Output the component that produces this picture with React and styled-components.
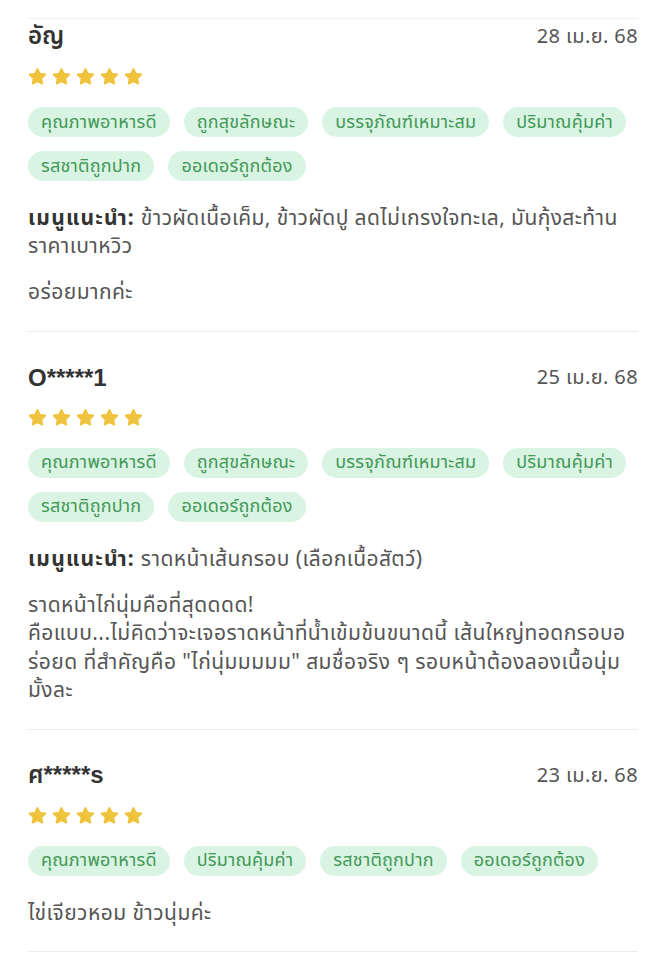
import React from "react";
import styled, { createGlobalStyle } from "styled-components";

const Global = createGlobalStyle`
  html, body { margin: 0; padding: 0; background: #fff; }
  body { font-family: "Noto Sans", "Noto Sans Thai", "Liberation Sans", sans-serif; -webkit-font-smoothing: antialiased; }
`;

const Page = styled.div`
  padding: 18px 28px 0 28px;
  width: 610px;
`;

const Divider = styled.div`
  height: 1px;
  background: #f0f0f0;
`;

const Card = styled.section`
  padding: ${(p) => (p.$first ? "3px" : "31px")} 0 25px 0;
  border-bottom: 1px solid #ececec;
`;

const Header = styled.div`
  display: flex;
  justify-content: space-between;
  align-items: center;
  height: 30px;
`;

const Name = styled.div`
  font-family: "Liberation Sans", "Noto Sans Thai", "Noto Sans", sans-serif;
  font-size: 24px;
  font-weight: 600;
  color: #333;
`;

const DateText = styled.div`
  font-size: 20px;
  color: #555;
  letter-spacing: 0.4px;
`;

const Stars = styled.div`
  display: flex;
  gap: 3px;
  margin-top: 14px;
  height: 21px;
  margin-left: -1px;
`;

const Tags = styled.div`
  display: flex;
  flex-wrap: wrap;
  gap: 14px 14px;
  margin-top: 20px;
`;

const Tag = styled.span`
  display: inline-flex;
  align-items: center;
  height: 30px;
  padding: 0 13px;
  border-radius: 15px;
  background: #d9f4e2;
  color: #429858;
  font-size: 18px;
  letter-spacing: 0.2px;
`;

const Menu = styled.p`
  margin: 22px 0 0 0;
  font-size: 21px;
  line-height: 28px;
  letter-spacing: 0.4px;
  color: #555;
  b { color: #333; font-weight: 700; letter-spacing: 1.2px; }
`;

const Comment = styled.p`
  margin: ${(p) => (p.$afterMenu ? "18px" : "22px")} 0 0 0;
  font-size: 21px;
  line-height: 28.5px;
  letter-spacing: 0.45px;
  color: #555;
`;

const Star = () => (
  <svg width="21" height="21" viewBox="0 0 24 24">
    <path
      d="M12 2.2c.4 0 .7.2.9.6l2.5 5.1 5.6.8c.9.1 1.2 1.2.6 1.8l-4.1 4 1 5.6c.2.9-.8 1.6-1.6 1.1L12 18.6l-5 2.6c-.8.5-1.8-.2-1.6-1.1l1-5.6-4.1-4c-.6-.6-.3-1.7.6-1.8l5.6-.8 2.5-5.1c.2-.4.6-.6 1-.6z"
      fill="#f0c33c"
    />
  </svg>
);

const reviews = [
  {
    name: "อัญ",
    date: "28 เม.ย. 68",
    tags: ["คุณภาพอาหารดี", "ถูกสุขลักษณะ", "บรรจุภัณฑ์เหมาะสม", "ปริมาณคุ้มค่า", "รสชาติถูกปาก", "ออเดอร์ถูกต้อง"],
    menu: ["ข้าวผัดเนื้อเค็ม, ข้าวผัดปู ลดไม่เกรงใจทะเล, มันกุ้งสะท้าน", "ราคาเบาหวิว"],
    comment: ["อร่อยมากค่ะ"],
  },
  {
    name: "O*****1",
    date: "25 เม.ย. 68",
    tags: ["คุณภาพอาหารดี", "ถูกสุขลักษณะ", "บรรจุภัณฑ์เหมาะสม", "ปริมาณคุ้มค่า", "รสชาติถูกปาก", "ออเดอร์ถูกต้อง"],
    menu: ["ราดหน้าเส้นกรอบ (เลือกเนื้อสัตว์)"],
    comment: [
      "ราดหน้าไก่นุ่มคือที่สุดดดด!",
      "คือแบบ...ไม่คิดว่าจะเจอราดหน้าที่น้ำเข้มข้นขนาดนี้ เส้นใหญ่ทอดกรอบอ",
      "ร่อยด ที่สำคัญคือ \"ไก่นุ่มมมมม\" สมชื่อจริง ๆ รอบหน้าต้องลองเนื้อนุ่ม",
      "มั้งละ",
    ],
  },
  {
    name: "ศ*****s",
    date: "23 เม.ย. 68",
    tags: ["คุณภาพอาหารดี", "ปริมาณคุ้มค่า", "รสชาติถูกปาก", "ออเดอร์ถูกต้อง"],
    menu: null,
    comment: ["ไข่เจียวหอม ข้าวนุ่มค่ะ"],
  },
];

const Lines = ({ lines }) =>
  lines.map((l, i) => (
    <React.Fragment key={i}>
      {i > 0 && <br />}
      {l}
    </React.Fragment>
  ));

export default function App() {
  return (
    <>
      <Global />
      <Page>
        <Divider />
        {reviews.map((r, i) => (
          <Card key={i} $first={i === 0}>
            <Header>
              <Name>{r.name}</Name>
              <DateText>{r.date}</DateText>
            </Header>
            <Stars>
              {[0, 1, 2, 3, 4].map((s) => (
                <Star key={s} />
              ))}
            </Stars>
            <Tags>
              {r.tags.map((t) => (
                <Tag key={t}>{t}</Tag>
              ))}
            </Tags>
            {r.menu && (
              <Menu>
                <b>เมนูแนะนำ:</b> <Lines lines={r.menu} />
              </Menu>
            )}
            <Comment $afterMenu={!!r.menu}>
              <Lines lines={r.comment} />
            </Comment>
          </Card>
        ))}
      </Page>
    </>
  );
}
